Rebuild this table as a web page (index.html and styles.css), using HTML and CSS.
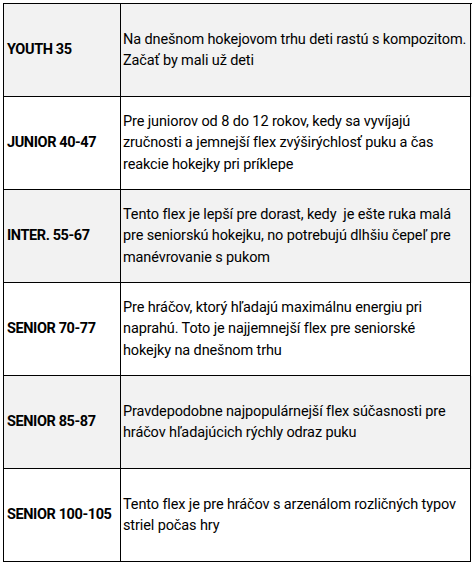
FILE: index.html
```html
<!DOCTYPE html>
<html lang="sk">
<head>
<meta charset="utf-8">
<title>Flex</title>
<link rel="stylesheet" href="styles.css">
</head>
<body>
<div class="table">
  <div class="row shade">
    <div class="cell name">YOUTH 35</div>
    <div class="cell desc">Na dnešnom hokejovom trhu deti rastú s kompozitom.<br>Začať by mali už deti</div>
  </div>
  <div class="row">
    <div class="cell name">JUNIOR 40-47</div>
    <div class="cell desc">Pre juniorov od 8 do 12 rokov, kedy sa vyvíjajú<br>zručnosti a jemnejší flex zvýširýchlosť puku a čas<br>reakcie hokejky pri príklepe</div>
  </div>
  <div class="row shade">
    <div class="cell name">INTER. 55-67</div>
    <div class="cell desc">Tento flex je lepší pre dorast, kedy &nbsp;je ešte ruka malá<br>pre seniorskú hokejku, no potrebujú dlhšiu čepeľ pre<br>manévrovanie s pukom</div>
  </div>
  <div class="row">
    <div class="cell name">SENIOR 70-77</div>
    <div class="cell desc">Pre hráčov, ktorý hľadajú maximálnu energiu pri<br>naprahú. Toto je najjemnejší flex pre seniorské<br>hokejky na dnešnom trhu</div>
  </div>
  <div class="row shade">
    <div class="cell name">SENIOR 85-87</div>
    <div class="cell desc">Pravdepodobne najpopulárnejší flex súčasnosti pre<br>hráčov hľadajúcich rýchly odraz puku</div>
  </div>
  <div class="row">
    <div class="cell name">SENIOR 100-105</div>
    <div class="cell desc">Tento flex je pre hráčov s arzenálom rozličných typov<br>striel počas hry</div>
  </div>
</div>
</body>
</html>
```

FILE: styles.css
```css
html, body {
  margin: 0;
  padding: 0;
  background: #ffffff;
}
body {
  padding: 3px;
  font-family: Roboto, "Liberation Sans", sans-serif;
  font-size: 14.5px;
  color: #000;
}
.table {
  width: 468px;
  border-left: 1px solid #000;
  border-top: 1px solid #000;
  display: flex;
  flex-direction: column;
}
.row {
  display: grid;
  grid-template-columns: 117px 350px;
  height: 93px;
}
.shade {
  background: #f2f2f2;
}
.cell {
  border-right: 1px solid #000;
  border-bottom: 1px solid #000;
  display: flex;
  align-items: center;
  line-height: 21.5px;
  white-space: nowrap;
  overflow: hidden;
}
.name {
  font-weight: 700;
  padding-left: 3px;
  letter-spacing: -0.4px;
}
.desc {
  padding-left: 2px;
  letter-spacing: -0.12px;
}
```
